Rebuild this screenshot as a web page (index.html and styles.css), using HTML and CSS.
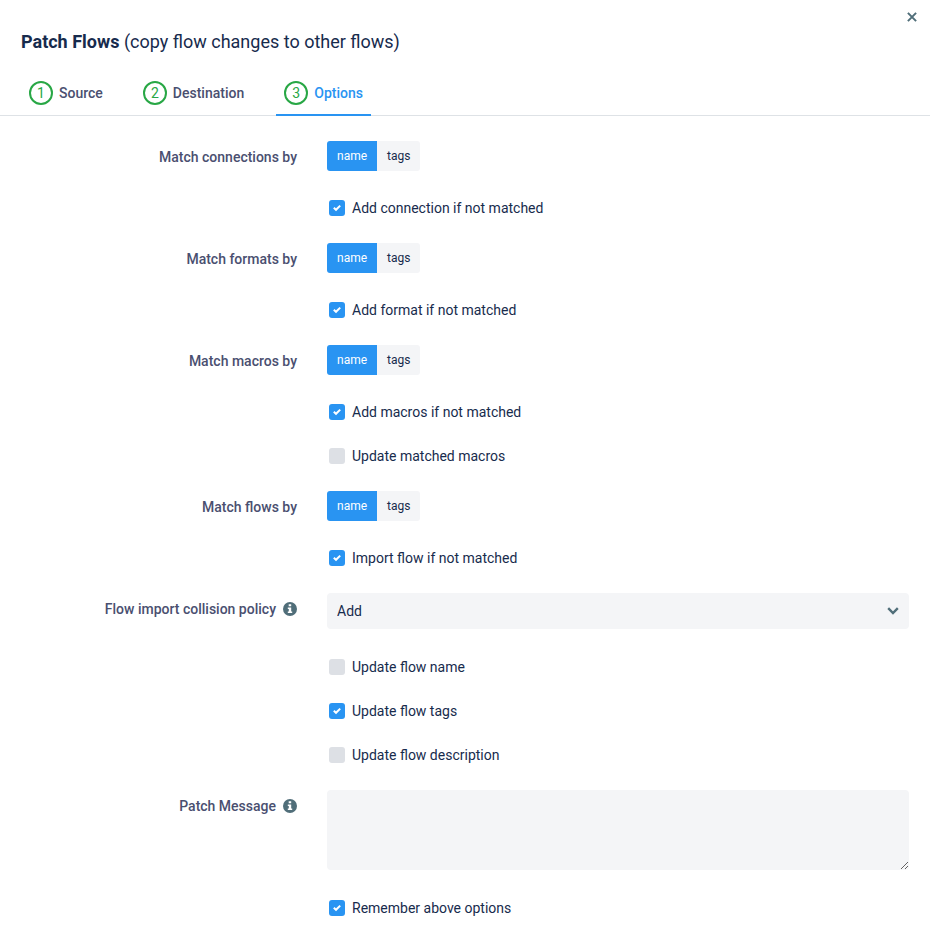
FILE: index.html
```html
<!DOCTYPE html>
<html lang="en">
<head>
  <meta charset="utf-8">
  <title>Patch Flows</title>
  <link rel="stylesheet" href="styles.css">
</head>
<body>
  <header class="top">
    <h1 class="title"><b>Patch Flows</b> (copy flow changes to other flows)</h1>
    <button type="button" class="close" aria-label="Close">
      <svg width="10" height="10" viewBox="0 0 10 10"><path d="M.9.9 9.100 9.100M9.100.9.9 9.100"/></svg>
    </button>
  </header>
  <nav class="steps">
    <a href="#source" class="step"><span class="number">1</span>Source</a>
    <a href="#destination" class="step"><span class="number">2</span>Destination</a>
    <a href="#options" class="step active"><span class="number">3</span>Options</a>
  </nav>
  <form class="options" id="options">
    <div class="row">
      <span class="label" id="connections-label">Match connections by</span>
      <div class="toggle" role="group" aria-labelledby="connections-label">
        <button type="button" class="on">name</button><button type="button">tags</button>
      </div>
    </div>
    <div class="row">
      <label class="check"><input type="checkbox" checked>Add connection if not matched</label>
    </div>

    <div class="row">
      <span class="label" id="formats-label">Match formats by</span>
      <div class="toggle" role="group" aria-labelledby="formats-label">
        <button type="button" class="on">name</button><button type="button">tags</button>
      </div>
    </div>
    <div class="row">
      <label class="check"><input type="checkbox" checked>Add format if not matched</label>
    </div>

    <div class="row">
      <span class="label" id="macros-label">Match macros by</span>
      <div class="toggle" role="group" aria-labelledby="macros-label">
        <button type="button" class="on">name</button><button type="button">tags</button>
      </div>
    </div>
    <div class="row">
      <label class="check"><input type="checkbox" checked>Add macros if not matched</label>
    </div>
    <div class="row">
      <label class="check"><input type="checkbox">Update matched macros</label>
    </div>

    <div class="row">
      <span class="label" id="flows-label">Match flows by</span>
      <div class="toggle" role="group" aria-labelledby="flows-label">
        <button type="button" class="on">name</button><button type="button">tags</button>
      </div>
    </div>
    <div class="row">
      <label class="check"><input type="checkbox" checked>Import flow if not matched</label>
    </div>

    <div class="row">
      <label class="label" for="policy">Flow import collision policy
        <svg class="info" viewBox="0 0 14 14"><circle cx="7" cy="7" r="7"/><path d="M5.7 2.3h2.5v2H5.7zM4.8 5.4h3.4v4h1v1.7H4.8V9.4h1V7.1h-1z"/></svg>
      </label>
      <div class="field">
        <select id="policy">
          <option>Add</option>
        </select>
        <svg class="arrow" viewBox="0 0 12 8"><path d="M1.200 1.200 6 6l4.800-4.800"/></svg>
      </div>
    </div>
    <div class="row">
      <label class="check"><input type="checkbox">Update flow name</label>
    </div>
    <div class="row">
      <label class="check"><input type="checkbox" checked>Update flow tags</label>
    </div>
    <div class="row">
      <label class="check"><input type="checkbox">Update flow description</label>
    </div>

    <div class="row">
      <label class="label" for="message">Patch Message
        <svg class="info" viewBox="0 0 14 14"><circle cx="7" cy="7" r="7"/><path d="M5.7 2.3h2.5v2H5.7zM4.8 5.4h3.4v4h1v1.7H4.8V9.4h1V7.1h-1z"/></svg>
      </label>
      <div class="field">
        <textarea id="message"></textarea>
      </div>
    </div>
    <div class="row">
      <label class="check"><input type="checkbox" checked>Remember above options</label>
    </div>
  </form>
  <script>
    document.querySelectorAll(".toggle button").forEach((button) => {
      button.addEventListener("click", () => {
        button.parentElement.querySelector(".on").classList.remove("on");
        button.classList.add("on");
      });
    });
  </script>
</body>
</html>
```

FILE: styles.css
```css
* {
  box-sizing: border-box;
}
body {
  margin: 0;
  background: #fff;
  color: #172b4d;
  font-family: Roboto, "Liberation Sans", sans-serif;
  font-size: 14px;
}
button,
select,
textarea {
  border: 0;
  color: inherit;
  font: inherit;
}
.top {
  display: flex;
  justify-content: space-between;
  align-items: flex-start;
  padding: 8px 9px 0 21px;
}
.title {
  margin: 22px 0 0;
  font-size: 18px;
  font-weight: 400;
  line-height: 24px;
}
.close {
  display: flex;
  padding: 4px;
  background: none;
}
.close svg {
  fill: none;
  stroke: #506e79;
  stroke-width: 2;
}
.steps {
  display: flex;
  gap: 24px;
  margin-top: 16px;
  padding-left: 21px;
  border-bottom: 1px solid #dee2e6;
}
.step {
  display: flex;
  align-items: center;
  gap: 6px;
  height: 46px;
  margin-bottom: -1px;
  padding: 2px 8px 0;
  border-bottom: 2px solid transparent;
  color: #4a4f70;
  font-weight: 500;
  text-decoration: none;
}
.step.active {
  border-color: #2994f2;
  color: #2994f2;
}
.number {
  width: 24px;
  height: 24px;
  border: 2px solid #28a745;
  border-radius: 50%;
  color: #28a745;
  font-weight: 400;
  line-height: 21px;
  text-align: center;
}
.options {
  display: grid;
  gap: 26px;
  padding: 25px 21px 24px;
}
.row {
  display: grid;
  grid-template-columns: repeat(12, 1fr);
  column-gap: 30px;
  align-items: start;
}
.label {
  grid-column: span 4;
  display: flex;
  justify-content: flex-end;
  align-items: center;
  gap: 7px;
  color: #4a4f70;
  font-weight: 500;
  line-height: 32px;
}
.info {
  width: 14px;
  height: 14px;
  fill: #506e79;
}
.info path {
  fill: #fff;
}
.toggle {
  grid-column: 5 / -1;
  display: flex;
}
.toggle button {
  height: 30px;
  padding: 0 10px;
  border-radius: 0 3px 3px 0;
  background: #f4f5f7;
  font-size: 12px;
}
.toggle button:first-child {
  border-radius: 3px 0 0 3px;
}
.toggle .on {
  background: #2994f2;
  color: #fff;
}
.check {
  grid-column: 5 / -1;
  display: flex;
  align-items: center;
  gap: 7px;
  padding-left: 2px;
  line-height: 18px;
}
.check input {
  appearance: none;
  width: 16px;
  height: 16px;
  margin: 0;
  border-radius: 3px;
  background: #dde0e5;
}
.check input:checked {
  background: #2994f2 url("data:image/svg+xml,%3Csvg xmlns='http://www.w3.org/2000/svg' viewBox='0 0 16 16'%3E%3Cpath d='M4.800 7.800 7 9.800 11.200 5.600' fill='none' stroke='white' stroke-width='2'/%3E%3C/svg%3E");
}
.field {
  grid-column: 5 / -1;
  position: relative;
  margin-bottom: 3px;
}
.field select,
.field textarea {
  display: block;
  width: 100%;
  height: 36px;
  padding: 0 10px;
  border-radius: 4px;
  background: #f4f5f7;
  appearance: none;
}
.field textarea {
  height: 80px;
  padding: 8px 10px;
  resize: vertical;
}
.arrow {
  position: absolute;
  top: 14px;
  right: 10px;
  width: 12px;
  height: 8px;
  fill: none;
  stroke: #506e79;
  stroke-width: 2.400;
  pointer-events: none;
}
```
